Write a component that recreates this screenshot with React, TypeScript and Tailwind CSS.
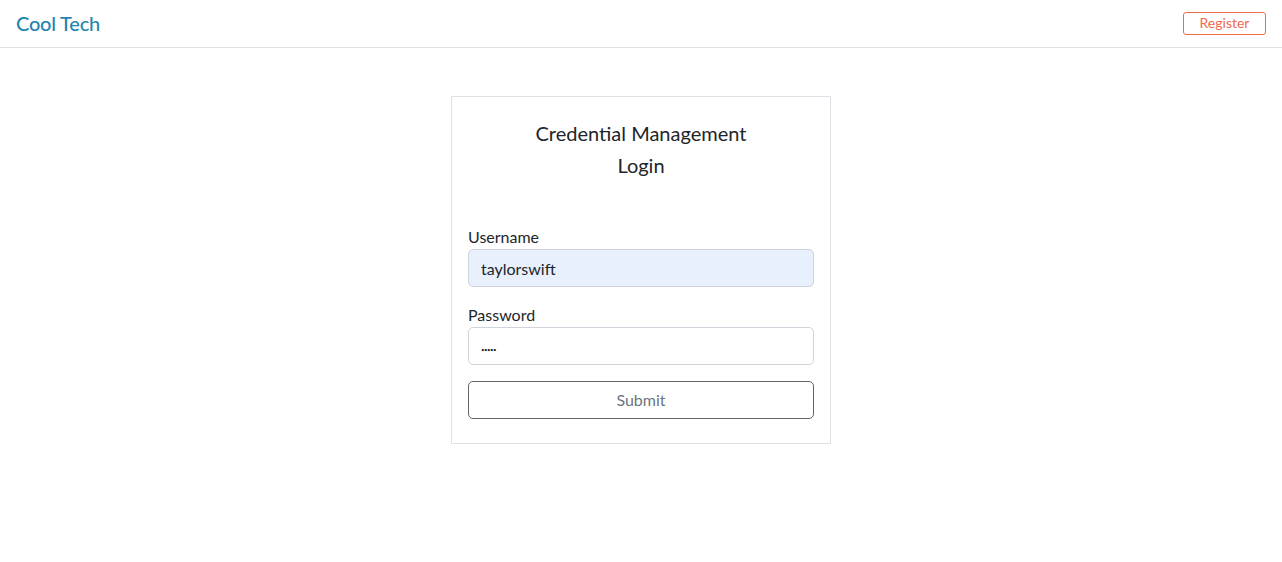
import React from 'react';

export default function App() {
  const font = { fontFamily: '"Lato", "Noto Sans", sans-serif' };
  return (
    <div className="min-h-screen bg-white text-[#212529]" style={font}>
      {/* Header */}
      <header className="h-[48px] border-b border-[#dee2e6] flex items-center justify-between pl-4 pr-4 pb-[1px]">
        <span className="text-[20px] text-[#1f85b0] font-medium tracking-[-0.2px]">Cool Tech</span>
        <button className="h-[23px] w-[83px] border border-[#ef6a4f] rounded-[3px] text-[14px] text-[#ef6a4f] leading-none">
          Register
        </button>
      </header>

      {/* Login card */}
      <div className="flex justify-center pt-[48px]">
        <div className="w-[380px] border border-[#dee2e6] px-4 pt-[20px] pb-[24px]">
          <div className="text-center text-[20px] leading-[32px] text-[#212529]">
            <div>Credential Management</div>
            <div>Login</div>
          </div>

          <form className="mt-[44px]" onSubmit={(e) => e.preventDefault()}>
            <label className="block text-[16px] leading-[24px]">Username</label>
            <input
              className="block w-full h-[38px] px-3 rounded-[5px] border border-[#ced4da] bg-[#e8f0fe] text-[16px] outline-none"
              defaultValue="taylorswift"
              style={font}
            />
            <label className="block text-[16px] leading-[24px] mt-[16px]">Password</label>
            <input
              type="password"
              className="block w-full h-[38px] px-3 pt-[6px] rounded-[5px] border border-[#ced4da] bg-white text-[6px] tracking-[-0.5px] outline-none"
              defaultValue="12345"
              style={font}
            />
            <button
              type="submit"
              className="block w-full h-[38px] mt-[16px] rounded-[5px] border border-[#5f656b] text-[16px] text-[#6c757d] bg-white"
              style={font}
            >
              Submit
            </button>
          </form>
        </div>
      </div>
    </div>
  );
}
